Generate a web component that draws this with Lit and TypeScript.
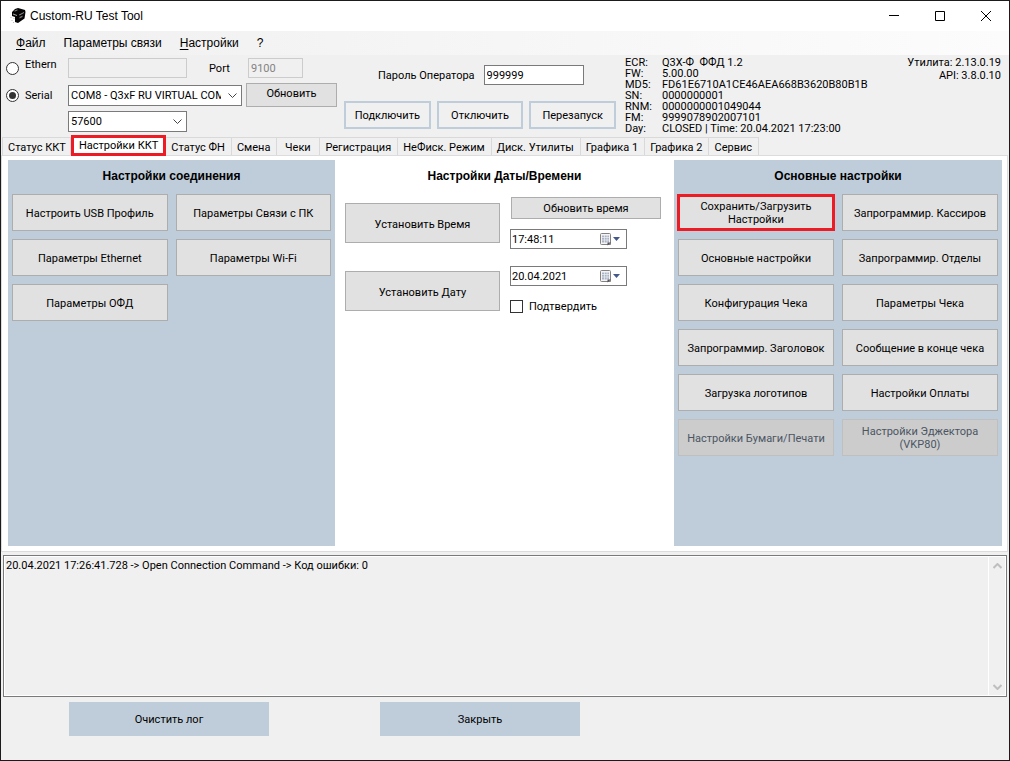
import { LitElement, html, css, svg } from "lit";
import { customElement, property } from "lit/decorators.js";
import { classMap } from "lit/directives/class-map.js";

const base = css`
  *, *::before, *::after { box-sizing: border-box; }
  button, input, select, textarea { font: inherit; color: inherit; margin: 0; border-radius: 0; }
  button {
    padding: 0 4px;
    border: 1px solid #adadad;
    background: #e1e1e1;
    line-height: 13px;
    white-space: pre-line;
  }
  button:disabled { background: #cccccc; border-color: #bfbfbf; color: #4b5563; }
`;

interface Action { label: string; disabled?: boolean; marked?: boolean; }

const CONNECTION: Action[] = [
  { label: "Настроить USB Профиль" }, { label: "Параметры Связи с ПК" },
  { label: "Параметры Ethernet" }, { label: "Параметры Wi-Fi" },
  { label: "Параметры ОФД" },
];

const GENERAL: Action[] = [
  { label: "Сохранить/Загрузить\nНастройки", marked: true }, { label: "Запрограммир. Кассиров" },
  { label: "Основные настройки" }, { label: "Запрограммир. Отделы" },
  { label: "Конфигурация Чека" }, { label: "Параметры Чека" },
  { label: "Запрограммир. Заголовок" }, { label: "Сообщение в конце чека" },
  { label: "Загрузка логотипов" }, { label: "Настройки Оплаты" },
  { label: "Настройки Бумаги/Печати", disabled: true }, { label: "Настройки Эджектора\n(VKP80)", disabled: true },
];

const TABS = [
  "Статус ККТ", "Настройки ККТ", "Статус ФН", "Смена", "Чеки", "Регистрация",
  "НеФиск. Режим", "Диск. Утилиты", "Графика 1", "Графика 2", "Сервис",
];

const DEVICE: [string, string][] = [
  ["ECR:", "Q3X-Ф  ФФД 1.2"],
  ["FW:", "5.00.00"],
  ["MD5:", "FD61E6710A1CE46AEA668B3620B80B1B"],
  ["SN:", "0000000001"],
  ["RNM:", "0000000001049044"],
  ["FM:", "9999078902007101"],
  ["Day:", "CLOSED | Time: 20.04.2021 17:23:00"],
];

@customElement("action-panel")
export class ActionPanel extends LitElement {
  @property() heading = "";
  @property({ attribute: false }) actions: Action[] = [];

  static styles = [base, css`
    :host { display: block; background: #bfccda; padding: 0 4px 4px; }
    h2 { margin: 0; height: 34px; font: bold 12px/32px "Liberation Sans", Arial, sans-serif; text-align: center; }
    .grid { display: grid; grid-template-columns: 1fr 1fr; grid-auto-rows: 37px; gap: 8px; }
    .grid button { padding-top: 1px; }
    .grid .marked { border: 3px solid #ed1c24; margin: 0 -1px; padding-top: 0; }
  `];

  render() {
    return html`
      <h2>${this.heading}</h2>
      <div class="grid">
        ${this.actions.map((a) => html`<button class=${classMap({ marked: !!a.marked })} ?disabled=${!!a.disabled}>${a.label}</button>`)}
      </div>`;
  }
}

const chevron = (points: string) => html`<svg class="chevron" width="9" height="6" viewBox="0 0 9 6" aria-hidden="true">${svg`<polyline points=${points} fill="none" stroke="currentColor"></polyline>`}</svg>`;

const calendar = html`
  <svg width="22" height="13" viewBox="0 0 22 13" aria-hidden="true">
    <path d="M.5 1.500q0-1 1-1h8q1 0 1 1v10h-9q-1 0-1-1z" fill="#f4f4f6" stroke="#85817f"></path>
    <path d="M2 2.500h7v7H2z" fill="#aab4c4"></path>
    <path d="M2 4.500h7M2 7h7M4.500 2v8M7 2v8" stroke="#eef1f6" stroke-width=".7"></path>
    <path d="M7.500 12.500V9.500h3.500z" fill="#55505a"></path>
    <path d="M13 4h7l-3.500 4z" fill="#44598a"></path>
  </svg>`;

@customElement("app-root")
export class AppRoot extends LitElement {
  static styles = [base, css`
    :host {
      display: flex;
      flex-direction: column;
      box-sizing: border-box;
      min-height: 100vh;
      border: 1px solid #1b1b1b;
      background: #f0f0f0;
      color: #000;
      font: 11px/13px Roboto, "Liberation Sans", sans-serif;
    }
    .titlebar { display: flex; align-items: center; height: 30px; padding-left: 9px; background: #fff; }
    .titlebar h1 { flex: 1; margin: 0 0 0 4px; font: 12px/16px "Liberation Sans", Arial, sans-serif; }
    .caption { width: 46px; height: 30px; padding: 0; border: 0; background: none; }
    .caption svg { display: block; margin: 0 auto; }

    .menu {
      display: flex; align-items: center; gap: 18px; height: 24px; padding-left: 15px;
      background: linear-gradient(90deg, #f0f0f0, #fcfcfc);
      font: 12px/16px "Liberation Sans", Arial, sans-serif;
    }
    .menu a { color: inherit; text-decoration: none; }
    .menu u { text-underline-offset: 2px; }

    .header { display: flex; align-items: flex-start; height: 80px; padding: 0 8px 0 5px; }
    .port-form { display: flex; flex-direction: column; gap: 4px; width: 332px; padding-top: 3px; }
    .line { display: flex; align-items: center; }
    .line:first-child { margin-bottom: 1px; }
    .choice { display: flex; align-items: center; width: 62px; height: 20px; gap: 6px; }
    .choice.raised span { align-self: flex-start; }
    .choice input {
      appearance: none; width: 13px; height: 13px; border: 1px solid #333; border-radius: 50%;
      background: #fff; display: grid; place-items: center;
    }
    .choice input:checked::before { content: ""; width: 7px; height: 7px; border-radius: 50%; background: #333; }
    .field { height: 20px; padding: 0 2px; border: 1px solid #7a7a7a; background: #fff; }
    .field:disabled { border-color: #ccc; background: #f0f0f0; color: #838383; }
    .address { width: 119px; }
    .port-label { width: 39px; margin-left: 22px; }
    .port { width: 55px; }
    .combo { display: grid; align-items: center; }
    .combo > * { grid-area: 1 / 1; }
    .combo select { appearance: none; width: 100%; height: 21px; padding: 0 20px 0 2px; border: 1px solid #7a7a7a; background: #fff; overflow: hidden; opacity: 1; }
    .combo .chevron { justify-self: end; margin: 1px 5px 0 0; pointer-events: none; color: #444; }
    .com { width: 174px; }
    .baud { width: 119px; margin-left: 62px; }
    .refresh { width: 91px; height: 24px; margin-left: 4px; padding-bottom: 4px; }

    .operator { display: flex; flex-direction: column; gap: 16px; width: 272px; margin-left: 6px; padding-top: 10px; }
    .password { display: flex; align-items: center; gap: 9px; padding-left: 34px; }
    .password input { width: 100px; }
    .commands { display: grid; grid-template-columns: 1fr 1fr 1fr; gap: 6px; height: 28px; }
    .commands button { border: 2px solid #bfccda; background: #f0f0f0; }

    .device { display: grid; grid-template-columns: 37px auto; margin: 2px 0 0 9px; line-height: 11px; white-space: pre; }
    .device dd { margin: 0; }
    .versions { margin: 1px 0 0 auto; text-align: right; }

    .tabs { display: flex; align-items: flex-end; height: 20px; padding-left: 1px; }
    .tab { min-width: 43px; height: 18px; padding: 1px 6px 0 5px; border: solid #d9d9d9; border-width: 1px 1px 0 0; background: #f0f0f0; white-space: nowrap; }
    .tab:first-child { border-left-width: 1px; padding-right: 4px; }
    .tab.active { position: relative; height: 21px; margin-bottom: -1px; padding: 0 5px; border: 3px solid #ed1c24; background: #fff; }
    .page {
      flex: 1; display: grid; grid-template-columns: 327fr 339fr 328fr;
      margin-right: 1px; padding: 4px 5px 5px 6px; border: 1px solid #dcdcdc; background: #fff;
    }
    .clock h2 { margin: 0; height: 34px; font: bold 12px/32px "Liberation Sans", Arial, sans-serif; text-align: center; }
    .clock-body { display: grid; grid-template-columns: 155px 1fr; gap: 10px; padding: 0 13px 0 10px; }
    .setters { display: flex; flex-direction: column; gap: 28px; padding-top: 9px; }
    .setters button { height: 40px; padding-top: 2px; }
    .values { display: flex; flex-direction: column; align-items: flex-start; padding-top: 3px; }
    .sync { align-self: stretch; height: 22px; margin: 0 0 10px 1px; }
    .picker { display: flex; align-items: center; width: 117px; height: 20px; margin-bottom: 17px; padding-right: 4px; border: 1px solid #7a7a7a; background: #fff; }
    .picker input { flex: 1; min-width: 0; padding: 0 1px; border: 0; background: none; }
    .confirm { display: flex; align-items: center; gap: 6px; margin-top: -3px; }
    .confirm input { appearance: none; width: 13px; height: 13px; border: 1px solid #333; background: #fff; }

    .log { display: flex; height: 142px; margin: 3px 2px 0; border: 1px solid #7a7a7a; padding: 1px; background: #fff; }
    .log textarea { flex: 1; padding: 2px 1px; border: 0; background: #f0f0f0; resize: none; outline: 0; }
    .scroll { display: flex; flex-direction: column; justify-content: space-between; width: 16px; margin-left: 1px; background: #f0f0f0; color: #bfbfbf; }
    .scroll button { width: 16px; height: 17px; padding: 0; border: 0; background: none; color: inherit; white-space: normal; }
    .scroll svg { display: block; margin: 0 auto; stroke-width: 2px; }
    .footer { display: flex; gap: 111px; padding: 5px 68px 24px; }
    .footer button { width: 200px; height: 34px; border: 0; background: #bfccda; }
  `];

  render() {
    return html`
      <header class="titlebar">
        <svg width="16" height="16" viewBox="0 0 16 16" aria-hidden="true">
          <path d="M2 4l3-3 3-1 7 2 .5 2-1 6.500L8 15l-3-1V9L2 8z" fill="#050505"></path>
          <path d="M4 3l3-1.500 1 .5-3 1.500zM9 6.500l5-2.500v1L9.500 7.500z" fill="#8d8d8d"></path>
          <path d="M9.500 9l3-1.500V9l-3 1.500z" fill="#777"></path>
          <path d="M3 5.500l4 1.500v1L3 6.500z" fill="#aaa"></path>
          <path d="M.5 9.500h1M1.500 12.500h1M3 14.500h1M3.500 10.500h1" stroke="#bbb"></path>
        </svg>
        <h1>Custom-RU Test Tool</h1>
        <button class="caption" aria-label="Свернуть"><svg width="10" height="11" viewBox="0 0 10 11"><path d="M0 4.500h10" stroke="#000"></path></svg></button>
        <button class="caption" aria-label="Развернуть"><svg width="10" height="10" viewBox="0 0 10 10"><path d="M.5.5h9v9h-9z" fill="none" stroke="#000"></path></svg></button>
        <button class="caption" aria-label="Закрыть окно"><svg width="10" height="10" viewBox="0 0 10 10"><path d="M0 0l10 10M10 0L0 10" stroke="#000"></path></svg></button>
      </header>

      <nav class="menu">
        <a href="#"><u>Ф</u>айл</a><a href="#">Параметры связи</a><a href="#"><u>Н</u>астройки</a><a href="#">?</a>
      </nav>

      <section class="header">
        <div class="port-form">
          <div class="line">
            <label class="choice raised"><input type="radio" name="link"><span>Ethern</span></label>
            <input class="field address" aria-label="Адрес" disabled>
            <label class="port-label" for="port">Port</label>
            <input class="field port" id="port" value="9100" disabled>
          </div>
          <div class="line">
            <label class="choice"><input type="radio" name="link" checked><span>Serial</span></label>
            <div class="combo com">
              <select aria-label="COM"><option>COM8 - Q3xF RU VIRTUAL COM Port</option></select>
              ${chevron("0.5,0.5 4.5,4.5 8.5,0.5")}
            </div>
            <button class="refresh">Обновить</button>
          </div>
          <div class="line">
            <div class="combo baud">
              <select aria-label="Скорость"><option>57600</option></select>
              ${chevron("0.5,0.5 4.5,4.5 8.5,0.5")}
            </div>
          </div>
        </div>
        <div class="operator">
          <div class="password">
            <label for="password">Пароль Оператора</label>
            <input class="field" id="password" value="999999">
          </div>
          <div class="commands"><button>Подключить</button><button>Отключить</button><button>Перезапуск</button></div>
        </div>
        <dl class="device">${DEVICE.map(([k, v]) => html`<dt>${k}</dt><dd>${v}</dd>`)}</dl>
        <div class="versions">Утилита: 2.13.0.19<br>API: 3.8.0.10</div>
      </section>

      <div class="tabs" role="tablist">
        ${TABS.map((t, i) => html`<button role="tab" aria-selected=${i === 1 ? "true" : "false"} class=${classMap({ tab: true, active: i === 1 })}>${t}</button>`)}
      </div>
      <main class="page">
        <action-panel heading="Настройки соединения" .actions=${CONNECTION}></action-panel>
        <section class="clock">
          <h2>Настройки Даты/Времени</h2>
          <div class="clock-body">
            <div class="setters"><button>Установить Время</button><button>Установить Дату</button></div>
            <div class="values">
              <button class="sync">Обновить время</button>
              <div class="picker"><input aria-label="Время" value="17:48:11">${calendar}</div>
              <div class="picker"><input aria-label="Дата" value="20.04.2021">${calendar}</div>
              <label class="confirm"><input type="checkbox">Подтвердить</label>
            </div>
          </div>
        </section>
        <action-panel heading="Основные настройки" .actions=${GENERAL}></action-panel>
      </main>

      <div class="log">
        <textarea aria-label="Лог" readonly .value=${"20.04.2021 17:26:41.728 -> Open Connection Command -> Код ошибки: 0"}></textarea>
        <div class="scroll">
          <button aria-label="Вверх">${chevron("0.5,5 4.5,1 8.5,5")}</button>
          <button aria-label="Вниз">${chevron("0.5,1 4.5,5 8.5,1")}</button>
        </div>
      </div>
      <footer class="footer"><button>Очистить лог</button><button>Закрыть</button></footer>`;
  }
}
